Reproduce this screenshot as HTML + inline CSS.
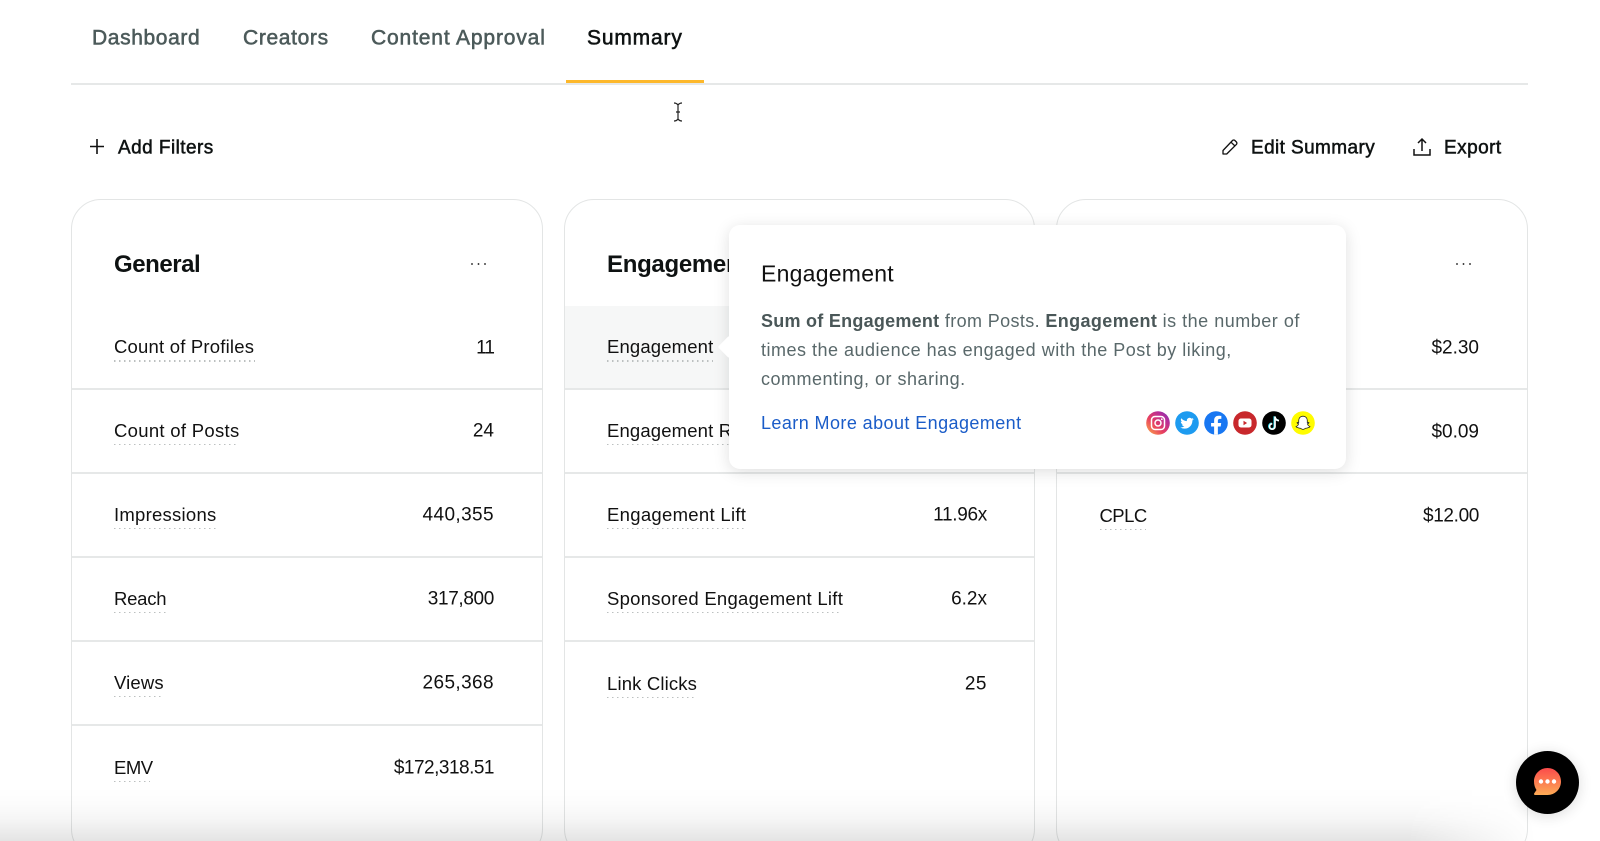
<!DOCTYPE html>
<html lang="en"><head><meta charset="utf-8"><title>Summary</title>
<style>
html,body{margin:0;padding:0;width:1600px;height:841px;overflow:hidden;background:#fff;font-family:"Liberation Sans",Arial,sans-serif}
#p{position:relative;width:1600px;height:841px;overflow:hidden}
.t{position:absolute;white-space:nowrap;line-height:1;transform:translateY(-50%)}
.tab{font-size:21px;color:#4c5a5a;-webkit-text-stroke:.55px #4c5a5a}
.act{color:#0e1212;-webkit-text-stroke:.55px #0e1212}
.btn{font-size:19px;letter-spacing:.35px;color:#0e1212;-webkit-text-stroke:.5px #0e1212}
.h{font-size:24px;font-weight:bold;color:#0e1212;letter-spacing:-.45px}
.l{font-size:18.5px;letter-spacing:.15px;color:#111}
.v{font-size:19px;color:#111;text-align:right}
.card{position:absolute;top:199px;height:660px;width:470px;box-sizing:border-box;border:1.5px solid #e3e5e5;border-radius:30px;background:#fff}
.d{position:absolute;height:2px;background:#e6e8e8}
.u{position:absolute;height:1.5px;background:repeating-linear-gradient(to right,#bcc0c0 0 1.5px,transparent 1.5px 5px)}
.dots{position:absolute;font-size:0;width:15px;height:2px;background:radial-gradient(circle at 1px 1px,#444 .8px,transparent 1px) 0 0/6.5px 2px repeat-x}
#tip{position:absolute;left:729px;top:225px;width:617px;height:244px;background:#fff;border-radius:11px;box-shadow:0 3px 16px rgba(0,0,0,.13)}
#ar{position:absolute;left:721px;top:339px;width:16px;height:16px;background:#fff;transform:rotate(45deg);border-radius:2px}
.b{font-size:18px;letter-spacing:.5px;color:#59686a}
.b b{color:#4a5758}
#fade{position:absolute;left:0;top:788px;width:1600px;height:53px;background:linear-gradient(to bottom,rgba(0,0,0,0),rgba(0,0,0,.012) 30%,rgba(0,0,0,.04) 60%,rgba(0,0,0,.105));-webkit-mask-image:linear-gradient(to right,#000 88%,transparent 96%);mask-image:linear-gradient(to right,#000 88%,transparent 96%)}
#chat{position:absolute;left:1516px;top:751px;width:63px;height:63px;border-radius:50%;background:#000;box-shadow:0 2px 14px rgba(0,0,0,.14)}
svg{position:absolute;overflow:visible}
</style></head><body><div id="p">

<span class="t tab" style="left:92px;top:38px;letter-spacing:.62px">Dashboard</span>
<span class="t tab" style="left:243px;top:38px;letter-spacing:.65px">Creators</span>
<span class="t tab" style="left:371px;top:38px;letter-spacing:.85px">Content Approval</span>
<span class="t tab act" style="left:587px;top:38px;letter-spacing:.83px">Summary</span>
<div class="d" style="left:71px;top:83px;width:1457px;height:1.5px"></div>
<div style="position:absolute;left:566px;top:80px;width:138px;height:3px;background:#fdb82b"></div>

<svg style="left:670px;top:99.500px" width="16" height="24" viewBox="0 0 16 24" fill="none" stroke="#222" stroke-width="1.2"><path d="M4 3c2 0 3 .6 4 2 1-1.400 2-2 4-2M8 5v14M4 21c2 0 3-.6 4-2 1 1.400 2 2 4 2M6 12h4"/></svg>

<svg style="left:89px;top:139px" width="16" height="15" viewBox="0 0 16 15" fill="none" stroke="#111" stroke-width="1.6"><path d="M8 0v15M1 7.500h14"/></svg>
<span class="t btn" style="left:118px;top:148px;letter-spacing:.45px">Add Filters</span>
<svg style="left:1221px;top:137.500px" width="18" height="18" viewBox="0 0 18 18" fill="none" stroke="#111" stroke-width="1.3" stroke-linejoin="round"><path d="M2 12.500 11.500 2.500a1.700 1.700 0 0 1 2.400 0l1.500 1.500a1.700 1.700 0 0 1 0 2.400L5.700 16H2zM10 4.200l4 3.800"/></svg>
<span class="t btn" style="left:1251px;top:148px;letter-spacing:.4px">Edit Summary</span>
<svg style="left:1412px;top:137px" width="20" height="20" viewBox="0 0 20 20" fill="none" stroke="#111" stroke-width="1.500"><path d="M10 14V2M6 6l4-4 4 4M2 12v6h16v-6"/></svg>
<span class="t btn" style="left:1444px;top:148px;letter-spacing:.45px">Export</span>

<div class="card" style="left:71px;width:472px"></div>
<div class="card" style="left:564px;width:471px"></div>
<div class="card" style="left:1056px;width:472px"></div>

<span class="t h" style="left:114px;top:265px">General</span>
<div class="dots" style="left:470.500px;top:262.500px"></div>
<div class="dots" style="left:1456px;top:262.500px"></div>
<span class="t h" style="left:607px;top:265px;letter-spacing:-.3px">Engagement</span>

<div style="position:absolute;left:565px;top:306px;width:180px;height:82px;background:#f6f7f7"></div>

<!-- general -->
<span class="t l" style="left:114px;top:347px;letter-spacing:.2px">Count of Profiles</span><div class="u" style="left:114px;top:360px;width:141px"></div><span class="t v" style="right:1106px;top:347.500px;letter-spacing:-.9px">11</span>
<div class="d" style="left:72px;top:388px;width:470px"></div>
<span class="t l" style="left:114px;top:431px;letter-spacing:.3px">Count of Posts</span><div class="u" style="left:114px;top:443.500px;width:125px"></div><span class="t v" style="right:1106px;top:431px">24</span>
<div class="d" style="left:72px;top:472px;width:470px"></div>
<span class="t l" style="left:114px;top:515px;letter-spacing:.25px">Impressions</span><div class="u" style="left:114px;top:527.500px;width:102px"></div><span class="t v" style="right:1106px;top:515px;letter-spacing:.4px">440,355</span>
<div class="d" style="left:72px;top:556px;width:470px"></div>
<span class="t l" style="left:114px;top:599px;letter-spacing:-.25px">Reach</span><div class="u" style="left:114px;top:611.500px;width:53px"></div><span class="t v" style="right:1106px;top:599px;letter-spacing:-.35px">317,800</span>
<div class="d" style="left:72px;top:640px;width:470px"></div>
<span class="t l" style="left:114px;top:683px">Views</span><div class="u" style="left:114px;top:695.500px;width:50px"></div><span class="t v" style="right:1106px;top:683px;letter-spacing:.4px">265,368</span>
<div class="d" style="left:72px;top:724px;width:470px"></div>
<span class="t l" style="left:114px;top:768px;letter-spacing:-.5px">EMV</span><div class="u" style="left:114px;top:780.500px;width:36px"></div><span class="t v" style="right:1106px;top:768px;letter-spacing:-.5px">$172,318.51</span>

<!-- engagement -->
<span class="t l" style="left:607px;top:347px">Engagement</span><div class="u" style="left:607px;top:360px;width:106px"></div>
<div class="d" style="left:565px;top:388px;width:469px"></div>
<span class="t l" style="left:607px;top:431px">Engagement Rate</span><div class="u" style="left:607px;top:443.500px;width:150px"></div>
<div class="d" style="left:565px;top:472px;width:469px"></div>
<span class="t l" style="left:607px;top:515px;letter-spacing:.3px">Engagement Lift</span><div class="u" style="left:607px;top:527.500px;width:139px"></div><span class="t v" style="right:613px;top:515px;letter-spacing:-.3px">11.96x</span>
<div class="d" style="left:565px;top:556px;width:469px"></div>
<span class="t l" style="left:607px;top:599px;letter-spacing:.27px">Sponsored Engagement Lift</span><div class="u" style="left:607px;top:611.500px;width:235px"></div><span class="t v" style="right:613px;top:599px">6.2x</span>
<div class="d" style="left:565px;top:640px;width:469px"></div>
<span class="t l" style="left:607px;top:684px">Link Clicks</span><div class="u" style="left:607px;top:696.500px;width:90px"></div><span class="t v" style="right:613px;top:684px;letter-spacing:.5px">25</span>

<!-- third -->
<span class="t v" style="right:121px;top:347.500px">$2.30</span>
<div class="d" style="left:1057px;top:388px;width:470px"></div>
<span class="t v" style="right:121px;top:431.500px">$0.09</span>
<div class="d" style="left:1057px;top:472px;width:470px"></div>
<span class="t l" style="left:1099.500px;top:516px;letter-spacing:-.55px">CPLC</span><div class="u" style="left:1100px;top:528.500px;width:46px"></div><span class="t v" style="right:121px;top:516px;letter-spacing:-.35px">$12.00</span>

<!-- tooltip -->
<div id="tip"></div><div id="ar"></div><div style="position:absolute;left:729px;top:330px;width:20px;height:34px;background:#fff"></div>
<span class="t" style="left:761px;top:274px;font-size:23px;color:#111;letter-spacing:.25px">Engagement</span>
<span class="t b" style="left:761px;top:321px;letter-spacing:.38px"><b style="letter-spacing:.26px">Sum of Engagement</b> from Posts. <b>Engagement</b> <span style="letter-spacing:.51px">is the number of</span></span>
<span class="t b" style="left:761px;top:350px">times the audience has engaged with the Post by liking,</span>
<span class="t b" style="left:761px;top:379px">commenting, or sharing.</span>
<span class="t" style="left:761px;top:423px;font-size:18px;letter-spacing:.42px;color:#1a5cc8">Learn More about Engagement</span>

<svg style="left:1146px;top:411px" width="170" height="24" viewBox="0 0 170 24">
<defs>
<linearGradient id="ig" x1="0" y1="1" x2="1" y2="0"><stop offset="0" stop-color="#fdb44a"/><stop offset=".4" stop-color="#e8405f"/><stop offset=".75" stop-color="#b52c9a"/><stop offset="1" stop-color="#6a3bbd"/></linearGradient>
<clipPath id="fc"><circle cx="70" cy="12" r="11.800"/></clipPath>
</defs>
<circle cx="12" cy="12" r="11.800" fill="url(#ig)"/>
<rect x="5.500" y="5.500" width="13" height="13" rx="3.500" fill="none" stroke="#fff" stroke-width="1.500"/><circle cx="12" cy="12" r="3" fill="none" stroke="#fff" stroke-width="1.500"/><circle cx="15.800" cy="8.200" r=".9" fill="#fff"/>
<circle cx="41" cy="12" r="11.800" fill="#1d9bf0"/>
<g transform="translate(34.300 5.500) scale(.56)"><path fill="#fff" d="M23.950 4.570a10 10 0 0 1-2.820.77 4.960 4.960 0 0 0 2.160-2.720c-.95.55-2 .95-3.120 1.180a4.920 4.920 0 0 0-8.380 4.480C7.690 8.090 4.070 6.130 1.640 3.160a4.930 4.930 0 0 0 1.520 6.570 4.900 4.900 0 0 1-2.230-.61v.06a4.920 4.920 0 0 0 3.950 4.830 5 5 0 0 1-2.210.08 4.940 4.940 0 0 0 4.600 3.420A9.870 9.870 0 0 1 0 19.540a14 14 0 0 0 7.560 2.210c9.050 0 14-7.500 14-13.980 0-.21 0-.42-.02-.63a9.940 9.940 0 0 0 2.460-2.550z"/></g>
<circle cx="70" cy="12" r="11.800" fill="#1877f2"/>
<g clip-path="url(#fc)"><path transform="translate(58)" fill="#fff" d="M16.670 15.470 17.200 12h-3.330V9.750c0-.95.47-1.870 1.960-1.870h1.510V4.920s-1.370-.23-2.690-.23c-2.740 0-4.530 1.660-4.530 4.660V12H7.080v3.470h3.040V24h3.750v-8.530z"/></g>
<circle cx="99" cy="12" r="11.800" fill="#c8282c"/>
<rect x="92.500" y="7.500" width="13" height="9" rx="2.500" fill="#fff"/><path d="M97.500 9.800v4.400l3.600-2.200z" fill="#c8282c"/>
<circle cx="128" cy="12" r="11.800" fill="#000"/>
<path d="M129 5.500v10a2.700 2.700 0 1 1-2.700-2.700M129 5.800c.3 2.200 1.700 3.600 4 3.900" fill="none" stroke="#25d4e6" stroke-width="2" transform="translate(-.6 -.3)"/>
<path d="M129 5.500v10a2.700 2.700 0 1 1-2.700-2.700M129 5.800c.3 2.200 1.700 3.600 4 3.900" fill="none" stroke="#fff" stroke-width="1.700"/>
<circle cx="157" cy="12" r="11.800" fill="#fffc00"/>
<path d="M157 5.200c2.800 0 4.300 2 4.300 4.300v2.100l1.500-.2c.4.600-.2 1-1.400 1.400.4 1.400 1.300 2.300 2.600 2.800-.2.700-1.100.8-2 1-.4.800-1.300.3-2.300.6-.8.300-1.500 1.200-2.700 1.200s-1.900-.9-2.700-1.200c-1-.3-1.900.2-2.300-.6-.9-.2-1.800-.3-2-1 1.300-.5 2.200-1.400 2.600-2.800-1.200-.4-1.800-.8-1.400-1.400l1.500.2V9.500c0-2.300 1.500-4.300 4.300-4.300z" fill="#fff" stroke="#222" stroke-width=".8"/>
</svg>

<div id="fade"></div>

<div id="chat"></div>
<svg style="left:1531px;top:766px" width="32" height="32" viewBox="0 0 32 32">
<defs><linearGradient id="cg" x1="0" y1="0" x2="0" y2="1"><stop offset="0" stop-color="#fb4b4b"/><stop offset="1" stop-color="#fdab55"/></linearGradient></defs>
<path d="M16.500 2C24 2 30 8 30 15.500S24 29 16.500 29H4c-1 0-1.300-1-.7-1.700L5.500 24C3.900 21.700 3 18.700 3 15.500 3 8 9 2 16.500 2z" fill="url(#cg)"/>
<circle cx="10" cy="15.500" r="2.200" fill="#fff"/><circle cx="16.500" cy="15.500" r="2.200" fill="#fff"/><circle cx="23" cy="15.500" r="2.200" fill="#fff"/>
</svg>
</div></body></html>
